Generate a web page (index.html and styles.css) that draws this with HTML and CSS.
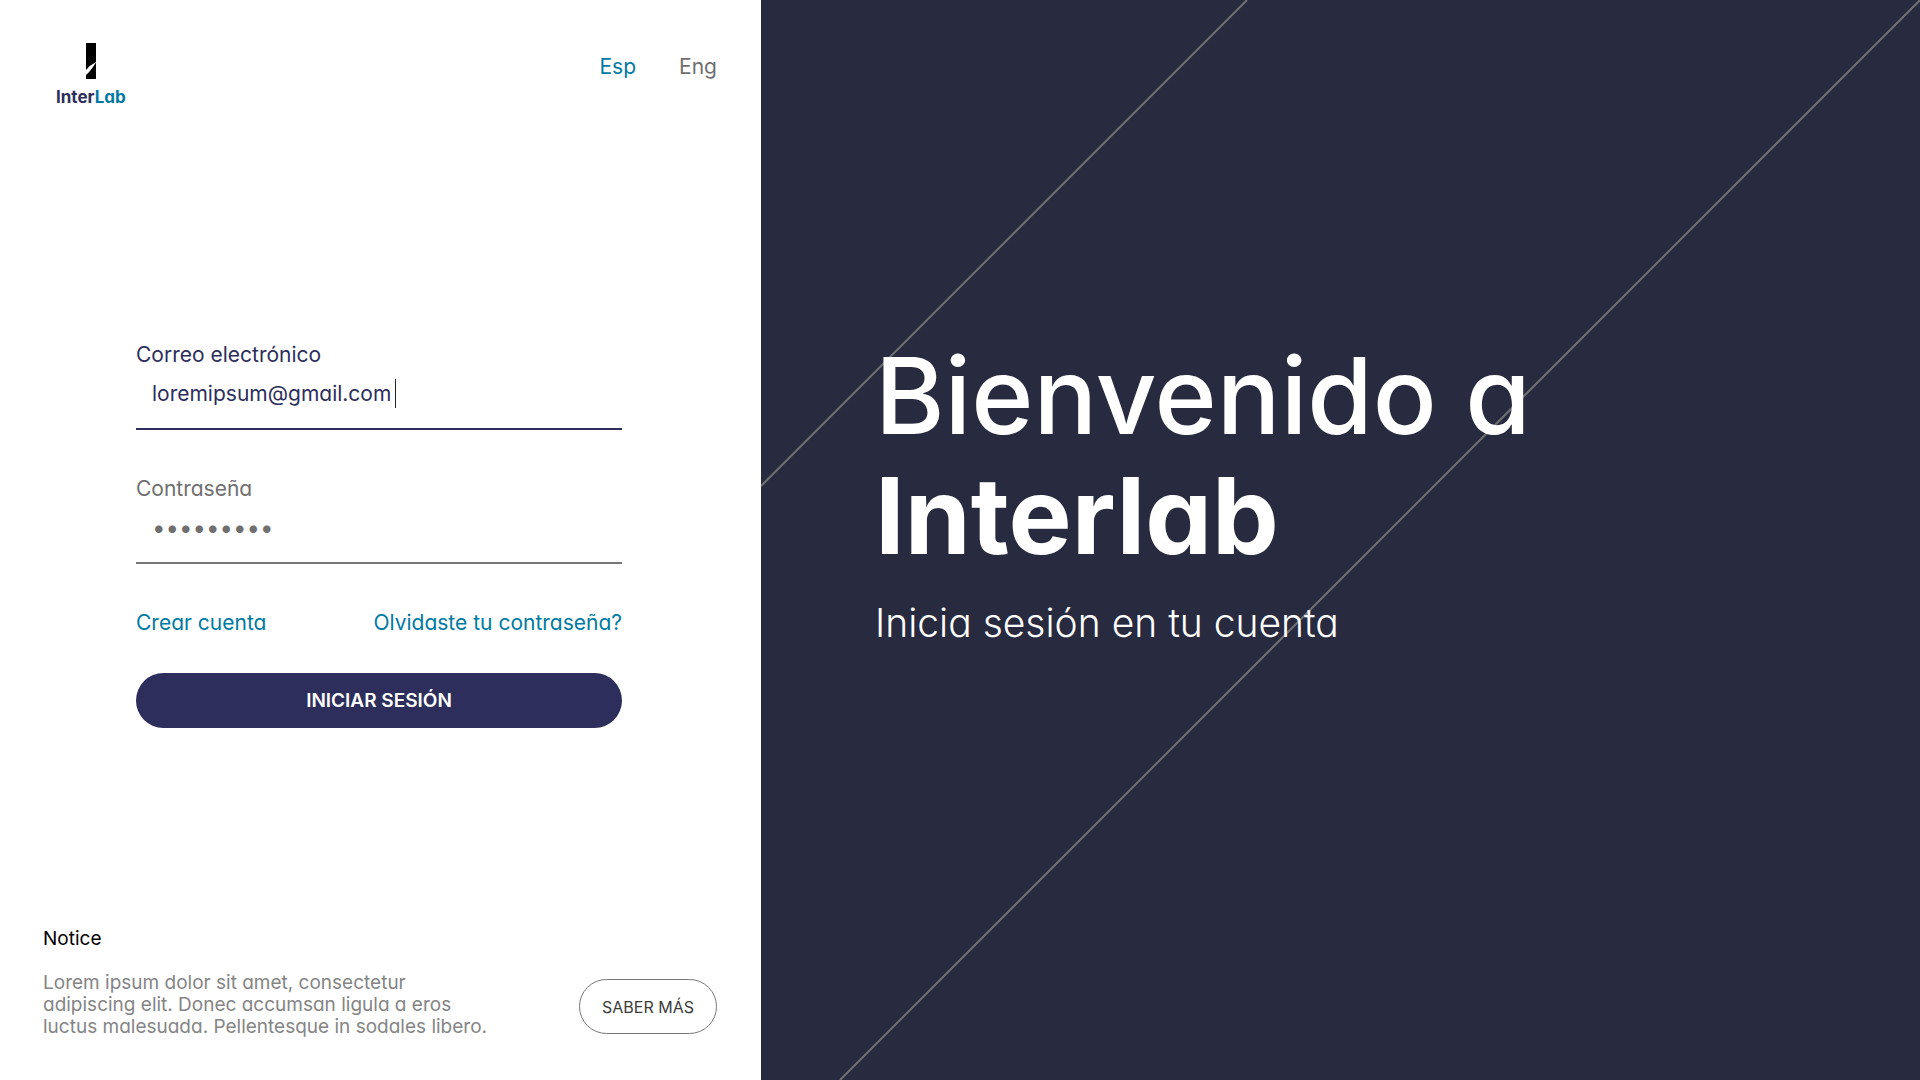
FILE: index.html
```html
<!DOCTYPE html>
<html lang="es">
<head>
<meta charset="utf-8">
<meta name="viewport" content="width=device-width, initial-scale=1">
<title>InterLab</title>
<link rel="stylesheet" href="styles.css">
</head>
<body>
<div class="page">
  <div class="panel">
    <header class="top">
      <a class="brand" href="#">
        <svg class="brand-mark" viewBox="0 0 10 36" aria-hidden="true">
          <path d="M0 0H10V19Q4 22 0 27Z"/>
          <path d="M10 19.500V36H0V32Q3 30 10 19.500Z"/>
        </svg>
        <span class="brand-name">Inter<span class="brand-accent">Lab</span></span>
      </a>
      <nav class="languages">
        <a class="language language-active" href="#">Esp</a>
        <a class="language" href="#">Eng</a>
      </nav>
    </header>

    <main class="content">
      <form class="login">
        <div class="field field-active">
          <label class="label" for="email">Correo electrónico</label>
          <div class="entry">
            <input class="input" id="email" type="text" value="loremipsum@gmail.com">
            <span class="caret"></span>
          </div>
        </div>
        <div class="field">
          <label class="label" for="password">Contraseña</label>
          <div class="entry">
            <input class="input input-password" id="password" type="password" value="contrasen">
          </div>
        </div>
        <div class="links">
          <a class="link" href="#">Crear cuenta</a>
          <a class="link" href="#">Olvidaste tu contraseña?</a>
        </div>
        <button class="submit" type="button">INICIAR SESIÓN</button>
      </form>
    </main>

    <footer class="notice">
      <div class="notice-text">
        <h2 class="notice-title">Notice</h2>
        <p class="notice-body">Lorem ipsum dolor sit amet, consectetur<br>adipiscing elit. Donec accumsan ligula a eros<br>luctus malesuada. Pellentesque in sodales libero.</p>
      </div>
      <button class="more" type="button">SABER MÁS</button>
    </footer>
  </div>

  <section class="hero">
    <svg class="hero-lines" viewBox="0 0 1159 1080" preserveAspectRatio="xMaxYMin slice" aria-hidden="true">
      <path d="M486 0L0 486M1159 0L79 1080"/>
    </svg>
    <h1 class="hero-title">Bienvenido a<br><strong class="hero-name">Interlab</strong></h1>
    <p class="hero-subtitle">Inicia sesión en tu cuenta</p>
  </section>
</div>
</body>
</html>
```
FILE: styles.css
```css
* {
  box-sizing: border-box;
}

body {
  margin: 0;
  font-family: Inter, "Liberation Sans", sans-serif;
  font-feature-settings: "cv11";
  font-size: 21px;
  line-height: 28px;
  color: #6f6f6f;
  background: #fff;
}

a {
  color: inherit;
  text-decoration: none;
}

input,
button {
  font: inherit;
  font-feature-settings: inherit;
  color: inherit;
}

.page {
  display: grid;
  grid-template-columns: 761fr 1159fr;
  min-height: 100vh;
}

.panel {
  display: flex;
  flex-direction: column;
  padding: 43px 44px 42px 43px;
}

.top {
  display: flex;
  justify-content: space-between;
}

.brand {
  display: flex;
  flex-direction: column;
  align-items: center;
  gap: 6px;
  margin-left: 13px;
}

.brand-mark {
  width: 10px;
  height: 36px;
}

.brand-name {
  font-size: 17px;
  font-weight: 700;
  line-height: 24px;
  color: #2d2e5b;
}

.brand-accent {
  color: #007aa3;
}

.languages {
  display: flex;
  gap: 43px;
  padding-top: 10px;
}

.language-active,
.link {
  color: #007aa3;
}

.content {
  flex: 1;
  display: flex;
  flex-direction: column;
  justify-content: center;
  padding: 32px 95px 0 93px;
}

.login {
  display: flex;
  flex-direction: column;
}

.field {
  margin-bottom: 45px;
  border-bottom: 2px solid #777;
}

.field-active {
  color: #2d2e5b;
  border-color: #2d2e5b;
}

.label {
  display: block;
}

.entry {
  display: flex;
  align-items: center;
  height: 59px;
  padding: 0 16px 10px;
}

.input {
  field-sizing: content;
  padding: 0;
  border: 0;
  outline: 0;
  background: none;
}

.input-password {
  font-size: 24px;
}

.caret {
  width: 1px;
  height: 29px;
  margin-left: 4px;
  background: #222;
}

.links {
  display: flex;
  justify-content: space-between;
  margin-bottom: 36px;
}

.submit {
  height: 55px;
  border: 0;
  border-radius: 28px;
  background: #2d2e5b;
  color: #fff;
  font-size: 19px;
  font-weight: 600;
}

.notice {
  display: flex;
  align-items: flex-end;
  justify-content: space-between;
}

.notice-title {
  margin: 0 0 22px;
  font-size: 19px;
  font-weight: 400;
  line-height: 22px;
  color: #000;
}

.notice-body {
  margin: 0;
  font-size: 19px;
  line-height: 22px;
  color: #858585;
}

.more {
  width: 138px;
  height: 55px;
  margin-bottom: 4px;
  padding: 0;
  border: 1px solid #777;
  border-radius: 28px;
  background: #fff;
  color: #3c3c3b;
  font-size: 16px;
}

.hero {
  position: relative;
  padding: 336px 114px 0;
  background: #282a3f;
  color: #fff;
}

.hero-lines {
  position: absolute;
  inset: 0;
  width: 100%;
  height: 100%;
  fill: none;
  stroke: #6f7072;
  stroke-width: 2;
}

.hero-title {
  position: relative;
  margin: 0;
  font-size: 106px;
  font-weight: 500;
  line-height: 120px;
}

.hero-name {
  font-weight: 700;
}

.hero-subtitle {
  position: relative;
  margin: 23px 0 0;
  font-size: 39px;
  font-weight: 300;
  line-height: 48px;
}
```
